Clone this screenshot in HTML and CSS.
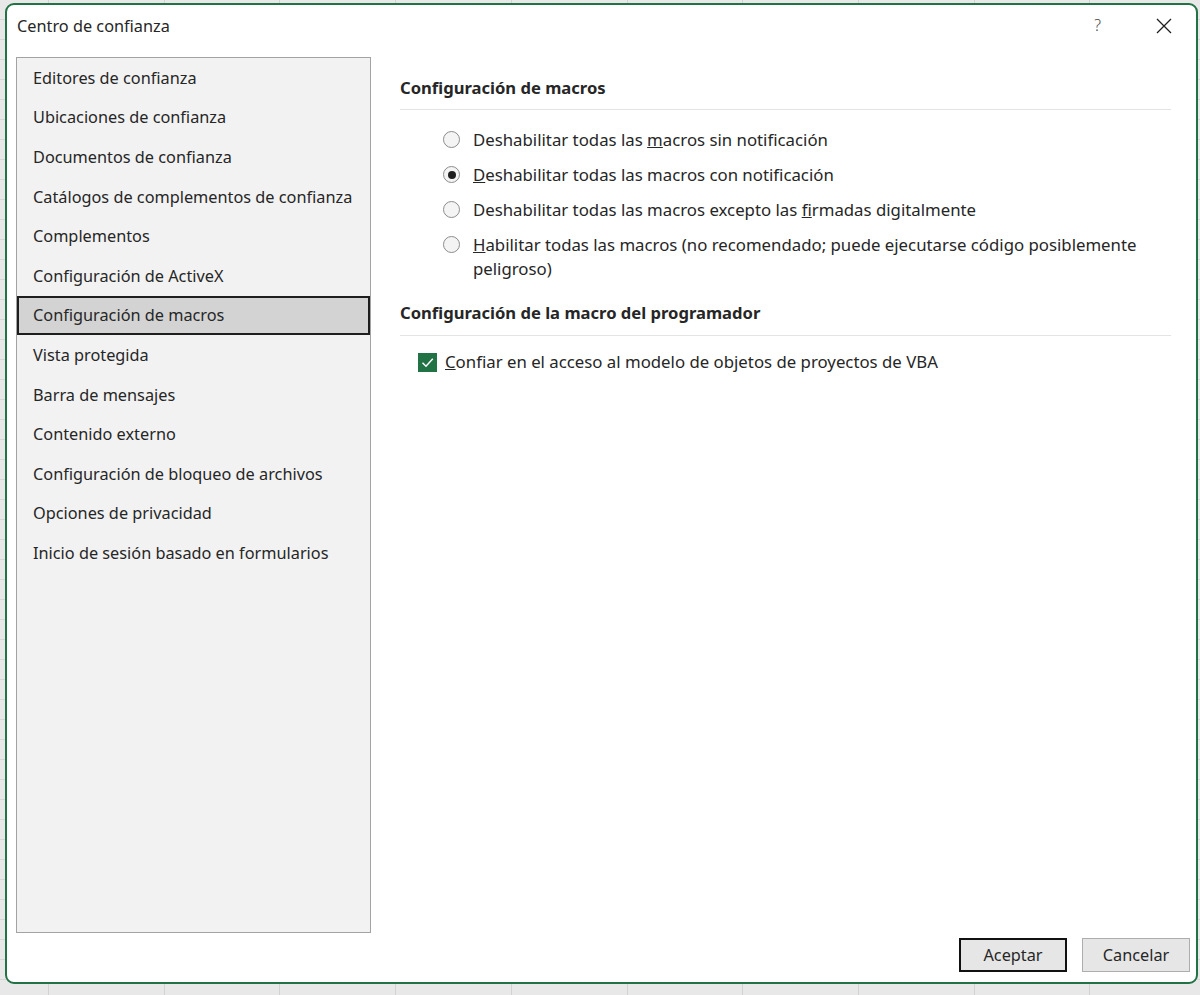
FILE: index.html
```html
<!DOCTYPE html>
<html lang="es">
<head>
  <meta charset="UTF-8">
  <title>Centro de confianza</title>
  <link rel="stylesheet" href="styles.css">
</head>
<body>

<div class="dialog">

  <!-- Title bar -->
  <div class="titlebar">
    <span class="title">Centro de confianza</span>
    <span class="help">?</span>
    <svg class="close" width="16" height="16" viewBox="0 0 16 16">
      <path d="M1 1 L15 15 M15 1 L1 15" stroke="#1f1f1f" stroke-width="1.3" fill="none"/>
    </svg>
  </div>

  <div class="main">
    <!-- Left nav -->
    <ul class="nav">
      <li>Editores de confianza</li>
      <li>Ubicaciones de confianza</li>
      <li>Documentos de confianza</li>
      <li>Catálogos de complementos de confianza</li>
      <li>Complementos</li>
      <li>Configuración de ActiveX</li>
      <li class="selected">Configuración de macros</li>
      <li>Vista protegida</li>
      <li>Barra de mensajes</li>
      <li>Contenido externo</li>
      <li>Configuración de bloqueo de archivos</li>
      <li>Opciones de privacidad</li>
      <li>Inicio de sesión basado en formularios</li>
    </ul>

    <!-- Settings -->
    <div class="content">
      <h2 class="section-title">Configuración de macros</h2>
      <div class="radio-list">
        <div class="option"><span class="radio"></span><span>Deshabilitar todas las <u>m</u>acros sin notificación</span></div>
        <div class="option"><span class="radio checked"></span><span><u>D</u>eshabilitar todas las macros con notificación</span></div>
        <div class="option"><span class="radio"></span><span>Deshabilitar todas las macros excepto las <u>f</u>irmadas digitalmente</span></div>
        <div class="option"><span class="radio"></span><span><u>H</u>abilitar todas las macros (no recomendado; puede ejecutarse código posiblemente peligroso)</span></div>
      </div>

      <h2 class="section-title second">Configuración de la macro del programador</h2>
      <div class="check-row">
        <span class="checkbox">
          <svg width="19" height="19" viewBox="0 0 19 19">
            <path d="M4.5 9.8 L8 13.2 L14.8 5.8" stroke="#fff" stroke-width="1.5" fill="none"/>
          </svg>
        </span>
        <span><u>C</u>onfiar en el acceso al modelo de objetos de proyectos de VBA</span>
      </div>
    </div>
  </div>

  <div class="footer">
    <button class="btn default">Aceptar</button>
    <button class="btn">Cancelar</button>
  </div>
</div>

</body>
</html>
```

FILE: styles.css
```css
body {
  margin: 0;
  height: 995px;
  overflow: hidden;
  font-family: "Noto Sans", "Open Sans", sans-serif;
  color: #262626;
  background-color: #e8e8e8;
  background-image:
    repeating-linear-gradient(90deg, transparent 0, transparent 48px, #d2d2d2 48px, #d2d2d2 49px, transparent 49px, transparent 115.7px),
    repeating-linear-gradient(180deg, transparent 0, transparent 19px, #d6d6d6 19px, #d6d6d6 20px);
}

.dialog {
  box-sizing: border-box;
  width: 1193px;
  height: 981px;
  margin: 3px 0 0 5px;
  background: #fff;
  border: 2px solid #217346;
  border-radius: 9px;
  display: flex;
  flex-direction: column;
}

.titlebar {
  height: 52px;
  display: flex;
  align-items: flex-start;
  padding: 11px 0 0 10px;
  box-sizing: border-box;
  line-height: 20px;
}

.title {
  font-size: 16.3px;
  flex: 1;
}

.help {
  font-size: 16px;
  font-weight: 300;
  color: #444;
  margin-right: 55px;
  margin-top: -1px;
}

.close {
  margin-right: 24px;
  margin-top: 2px;
}

.main {
  display: flex;
  height: 876px;
}

.nav {
  list-style: none;
  margin: 0 0 0 9px;
  padding: 0;
  width: 355px;
  box-sizing: border-box;
  background: #f2f2f2;
  border: 1px solid #a3a3a3;
  font-size: 16.3px;
}

.nav li {
  height: 39.6px;
  box-sizing: border-box;
  border: 2px solid transparent;
  padding-left: 14px;
  display: flex;
  align-items: center;
}

.nav li.selected {
  background: #d3d3d3;
  border-color: #1e1e1e;
}

.content {
  flex: 1;
  margin-left: 29px;
  margin-right: 25px;
  font-size: 16.8px;
}

.section-title {
  margin: 20px 0 0 0;
  font-size: 16.6px;
  font-weight: 700;
  line-height: 22px;
  padding-bottom: 10px;
  border-bottom: 1px solid #e3e3e3;
}

.section-title.second {
  margin-top: 16px;
  padding-bottom: 11px;
}

.radio-list {
  margin-top: 12px;
  padding-left: 43px;
}

.option {
  display: flex;
  align-items: flex-start;
  gap: 13px;
  line-height: 24px;
  padding: 5.5px 0;
}

.radio {
  flex: none;
  width: 17px;
  height: 17px;
  box-sizing: border-box;
  border-radius: 50%;
  border: 1px solid #8c8c8c;
  background: #f4f4f4;
  margin-top: 3.5px;
  position: relative;
}

.radio.checked::after {
  content: "";
  position: absolute;
  left: 3.5px;
  top: 3.5px;
  width: 8px;
  height: 8px;
  border-radius: 50%;
  background: #1f1f1f;
}

.check-row {
  display: flex;
  align-items: center;
  gap: 8px;
  margin-top: 14px;
  padding-left: 18px;
  line-height: 24px;
}

.checkbox {
  width: 19px;
  height: 19px;
  background: #217346;
  display: flex;
}

.footer {
  display: flex;
  justify-content: flex-end;
  gap: 15px;
  margin-top: 5px;
  padding-right: 6px;
}

.btn {
  width: 108px;
  height: 34px;
  box-sizing: border-box;
  font-family: inherit;
  font-size: 16.3px;
  color: #262626;
  background: #e6e6e6;
  border: 1px solid #adadad;
  border-radius: 0;
  padding: 0;
}

.btn.default {
  border: 2px solid #111;
}
```
